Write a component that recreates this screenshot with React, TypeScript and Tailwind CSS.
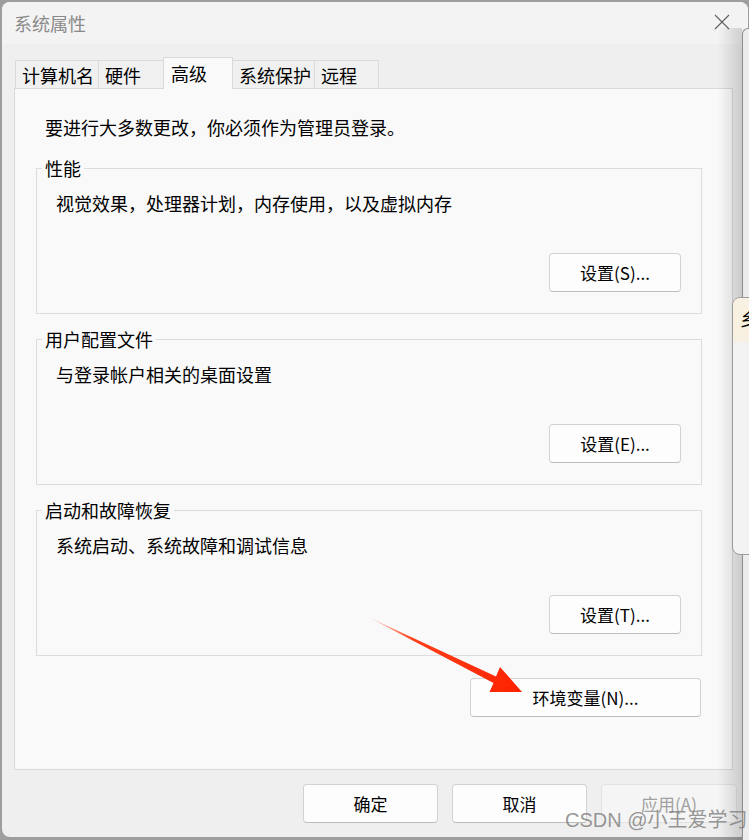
import React from 'react';

const font = "font-['Noto_Sans_CJK_SC','Noto_Sans',sans-serif]";

const tabs = [
  { label: '计算机名', w: 'w-[84px]' },
  { label: '硬件', w: 'w-[66px]' },
  { label: '高级', w: 'w-[70px]', active: true },
  { label: '系统保护', w: 'w-[83px]' },
  { label: '远程', w: 'w-[65px]' },
];

const WinButton = ({ children, className = '', disabled = false }: { children: React.ReactNode; className?: string; disabled?: boolean }) => (
  <button
    className={`h-[39px] rounded-[4px] border text-[17px] leading-none ${
      disabled
        ? 'border-[#e2e2e2] bg-[#f5f5f5] text-[#a0a0a0]'
        : 'border-[#d2d2d2] border-b-[#bdbdbd] bg-[#fdfdfd] text-black'
    } ${className}`}
  >
    {children}
  </button>
);

const Group = ({ title, desc, button }: { title: string; desc: string; button: string }) => (
  <div className="flex h-[146px] w-[666px] flex-col border border-[#dcdcdc]">
    <span className="-mt-[13px] ml-[5px] w-fit bg-[#f9f9f9] px-[3px] text-[18px] leading-[24px]">{title}</span>
    <p className="mt-[11px] pl-[19px] text-[18px] leading-[24px]">{desc}</p>
    <div className="mt-[38px] flex justify-end pr-[20px]">
      <WinButton className="w-[132px]">{button}</WinButton>
    </div>
  </div>
);

export default function App() {
  return (
    <div className={`relative h-[840px] w-[749px] overflow-hidden bg-[#9e9e9e] pl-[2px] pt-[2px] ${font}`}>
      {/* main dialog */}
      <div className="flex h-[835px] w-[746px] flex-col overflow-hidden rounded-lg bg-[#efefef]">
        {/* title bar */}
        <div className="flex h-[42px] items-center justify-between bg-[#f3f3f3] pl-[12px] pr-[18px]">
          <span className="text-[18px] leading-none text-[#8a8a8a]">系统属性</span>
          <svg width="16" height="16" viewBox="0 0 16 16" className="-mt-[2px]">
            <path d="M1 1L15 15M15 1L1 15" stroke="#5f5f5f" strokeWidth="1.1" />
          </svg>
        </div>

        {/* tabs */}
        <div className="ml-[13px] mt-[13px] flex h-[31px] items-end">
          {tabs.map((t) =>
            t.active ? (
              <div
                key={t.label}
                className={`${t.w} relative z-10 -mb-px -ml-px h-[32px] border border-b-0 border-[#d9d9d9] bg-[#f9f9f9] pl-[7px] pt-[3px] text-[18px] leading-[24px]`}
              >
                {t.label}
              </div>
            ) : (
              <div
                key={t.label}
                className={`${t.w} -ml-px h-[28px] border border-b-0 border-[#dadada] bg-[#f0f0f0] pl-[6px] pt-[2px] text-[18px] leading-[24px] first:ml-0`}
              >
                {t.label}
              </div>
            )
          )}
        </div>

        {/* tab panel */}
        <div className="ml-[12px] flex h-[682px] w-[719px] flex-col border border-[#d9d9d9] bg-[#f9f9f9] pl-[21px] pt-[26px]">
          <p className="pl-[9px] text-[18px] leading-[24px]">要进行大多数更改，你必须作为管理员登录。</p>
          <div className="mt-[29px] flex flex-col gap-[25px]">
            <Group title="性能" desc="视觉效果，处理器计划，内存使用，以及虚拟内存" button="设置(S)..." />
            <Group title="用户配置文件" desc="与登录帐户相关的桌面设置" button="设置(E)..." />
            <Group title="启动和故障恢复" desc="系统启动、系统故障和调试信息" button="设置(T)..." />
          </div>
          <div className="mt-[22px] flex w-[666px] justify-end pr-[1px]">
            <WinButton className="h-[38px] w-[231px]">环境变量(N)...</WinButton>
          </div>
        </div>

        {/* bottom buttons */}
        <div className="mt-[14px] flex justify-end gap-[14px] pr-[11px]">
          <WinButton className="w-[135px]">确定</WinButton>
          <WinButton className="w-[135px]">取消</WinButton>
          <WinButton className="w-[136px]" disabled>
            应用(A)
          </WinButton>
        </div>
      </div>

      {/* window behind on the right, casting shadow */}
      <div className="pointer-events-none absolute left-[718px] top-[28px] h-[812px] w-[24px] bg-gradient-to-r from-transparent to-black/15" />
      <div className="absolute left-[742px] top-[28px] h-[812px] w-[10px] rounded-tl-md border-l border-t border-[#8c8c8c] bg-[#ececec]" />

      {/* popup peeking from the right */}
      <div className="absolute left-[732px] top-[297px] flex h-[258px] w-[24px] flex-col overflow-hidden rounded-l-lg border border-[#9a9a9a] bg-[#f3f3f3]">
        <div className="h-[44px] bg-[#f8f1e2] pl-[7px] pt-[8px] text-[18px] leading-[24px]">乡</div>
      </div>

      {/* red annotation arrow */}
      <svg className="pointer-events-none absolute left-0 top-0" width="749" height="840">
        <defs>
          <linearGradient id="arrowFade" x1="366" y1="616" x2="521" y2="692" gradientUnits="userSpaceOnUse">
            <stop offset="0" stopColor="#ff2a00" stopOpacity="0" />
            <stop offset="0.3" stopColor="#ff2a00" stopOpacity="0.9" />
            <stop offset="1" stopColor="#ff2200" />
          </linearGradient>
        </defs>
        <polygon
          points="366,616 496,676.5 500,667 522,692 489.5,692 493.5,683"
          fill="url(#arrowFade)"
        />
      </svg>

      {/* watermark */}
      <span className="pointer-events-none absolute left-[565px] top-[807px] text-[20px] leading-[26px] text-[#7c7c7c]/80 font-['Liberation_Sans','Noto_Sans_CJK_SC',sans-serif]">
        CSDN @小王爱学习
      </span>
    </div>
  );
}
